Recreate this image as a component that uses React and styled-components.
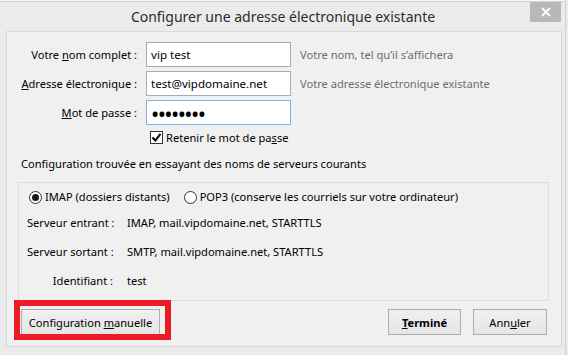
import React from "react";
import styled, { createGlobalStyle } from "styled-components";

const GlobalStyle = createGlobalStyle`
  html, body {
    margin: 0;
    padding: 0;
    background: #ebebeb;
  }
  body {
    font-family: "Noto Sans", "Open Sans", sans-serif;
    font-size: 11.1px;
    color: #000;
  }
`;

const App = () => {
  return (
    <>
      <GlobalStyle />
      <StyledWindow>
        <TopEdge />
        <TitleBar>
          <Title>Configurer une adresse électronique existante</Title>
          <CloseButton aria-label="Fermer">
            <svg width="10" height="10" viewBox="0 0 10 10">
              <path
                d="M1 1 L9 9 M9 1 L1 9"
                stroke="#fff"
                strokeWidth="1.8"
                fill="none"
              />
            </svg>
          </CloseButton>
        </TitleBar>

        <Client>
          <FormGrid>
            <Label>
              Votre <u>n</u>om complet :
            </Label>
            <Field defaultValue="vip test" />
            <Hint>Votre nom, tel qu’il s’affichera</Hint>

            <Label>
              <u>A</u>dresse électronique :
            </Label>
            <Field defaultValue="test@vipdomaine.net" />
            <Hint>Votre adresse électronique existante</Hint>

            <Label>
              <u>M</u>ot de passe :
            </Label>
            <Field type="password" defaultValue="password" $focused />
            <span />

            <span />
            <CheckRow>
              <CheckBox>
                <svg width="11" height="11" viewBox="0 0 11 11">
                  <path
                    d="M1.5 5.5 L4.3 8.5 L9.5 1.8"
                    stroke="#000"
                    strokeWidth="2"
                    fill="none"
                  />
                </svg>
              </CheckBox>
              <span>
                Retenir le mot de pa<u>s</u>se
              </span>
            </CheckRow>
          </FormGrid>

          <FoundText>
            Configuration trouvée en essayant des noms de serveurs courants
          </FoundText>

          <GroupBox>
            <RadioRow>
              <RadioOption>
                <Radio $checked />
                <span>IMAP (dossiers distants)</span>
              </RadioOption>
              <RadioOption>
                <Radio />
                <span>POP3 (conserve les courriels sur votre ordinateur)</span>
              </RadioOption>
            </RadioRow>
            <ServerGrid>
              <ServerLabel>Serveur entrant :</ServerLabel>
              <span>IMAP, mail.vipdomaine.net, STARTTLS</span>
              <ServerLabel>Serveur sortant :</ServerLabel>
              <span>SMTP, mail.vipdomaine.net, STARTTLS</span>
              <ServerLabel>Identifiant :</ServerLabel>
              <span>test</span>
            </ServerGrid>
          </GroupBox>

          <Footer>
            <Highlight>
              <Button $width="139px">
                Configuration <u>m</u>anuelle
              </Button>
            </Highlight>
            <ButtonGroup>
              <Button $width="73px" $bold>
                <u>T</u>erminé
              </Button>
              <Button $width="74px">
                Ann<u>u</u>ler
              </Button>
            </ButtonGroup>
          </Footer>
        </Client>
      </StyledWindow>
    </>
  );
};

const StyledWindow = styled.div`
  width: 565px;
  height: 355px;
  border-right: 1px solid #d2d2d2;
  background: #ebebeb;
  overflow: hidden;
`;

const TopEdge = styled.div`
  height: 1px;
  background: #f7f7f7;
  border-bottom: 1px solid #d4d4d4;
`;

const TitleBar = styled.div`
  position: relative;
  height: 29px;
  display: flex;
  align-items: center;
  justify-content: center;
`;

const Title = styled.div`
  font-size: 14px;
  color: #2b2b2b;
  margin-top: -1px;
  margin-left: 1px;
`;

const CloseButton = styled.div`
  position: absolute;
  top: 0;
  right: 4px;
  width: 31px;
  height: 20px;
  background: #b8b8b8;
  display: flex;
  align-items: center;
  justify-content: center;
`;

const Client = styled.div`
  margin-left: 6px;
  width: 554px;
  background: #f0f0f0;
  border: 1px solid #d9d9d9;
  padding: 10px 0 11px;
`;

const FormGrid = styled.div`
  display: grid;
  grid-template-columns: 130px 145px 1fr;
  column-gap: 9px;
  row-gap: 4px;
  align-items: center;
`;

const Label = styled.label`
  text-align: right;
  white-space: nowrap;
`;

const Field = styled.input.attrs({ readOnly: true })`
  box-sizing: border-box;
  height: 25px;
  width: 145px;
  margin: 0;
  padding: 0 4px;
  border: 1px solid ${(p) => (p.$focused ? "#7eb4ea" : "#ababab")};
  background: #fff;
  font-family: "Noto Sans", sans-serif;
  font-size: ${(p) => (p.type === "password" ? "22px" : "11.6px")};
  letter-spacing: ${(p) => (p.type === "password" ? "-1.6px" : "0")};
  color: #000;
  outline: none;
`;

const Hint = styled.span`
  color: #6d6d6d;
  white-space: nowrap;
`;

const CheckRow = styled.div`
  grid-column: 2 / 4;
  display: flex;
  align-items: center;
  gap: 3px;
  padding-left: 4px;
  margin-top: 1px;
  white-space: nowrap;
`;

const CheckBox = styled.span`
  box-sizing: border-box;
  width: 13px;
  height: 13px;
  border: 1px solid #333;
  background: #fff;
  display: flex;
  align-items: center;
  justify-content: center;
`;

const FoundText = styled.div`
  margin-top: 11px;
  padding-left: 14px;
  line-height: 16px;
  white-space: nowrap;
`;

const GroupBox = styled.div`
  margin: 10px 12px 0 11px;
  border: 1px solid #dcdcdc;
  padding: 6px 0 11px;
`;

const RadioRow = styled.div`
  display: flex;
  gap: 14px;
  padding-left: 10px;
  line-height: 16px;
  white-space: nowrap;
`;

const RadioOption = styled.label`
  display: flex;
  align-items: center;
  gap: 3px;
`;

const Radio = styled.span`
  box-sizing: border-box;
  width: 13px;
  height: 13px;
  border-radius: 50%;
  border: 1px solid #333;
  background: #fff;
  display: flex;
  align-items: center;
  justify-content: center;
  &::after {
    content: "";
    width: 7px;
    height: 7px;
    border-radius: 50%;
    background: ${(p) => (p.$checked ? "#1a1a1a" : "transparent")};
  }
`;

const ServerGrid = styled.div`
  display: grid;
  grid-template-columns: 86px 1fr;
  column-gap: 14px;
  row-gap: 13px;
  margin-top: 10px;
  padding-left: 8px;
  line-height: 16px;
  white-space: nowrap;
`;

const ServerLabel = styled.span`
  text-align: right;
`;

const Footer = styled.div`
  display: flex;
  justify-content: space-between;
  padding: 8px 14px 0;
`;

const ButtonGroup = styled.div`
  display: flex;
  gap: 12px;
`;

const Highlight = styled.span`
  position: relative;
  display: inline-flex;
  &::after {
    content: "";
    position: absolute;
    top: -9px;
    left: -7px;
    right: -11px;
    bottom: -5px;
    border: 6px solid #ed1c24;
    pointer-events: none;
  }
`;

const Button = styled.button`
  box-sizing: border-box;
  width: ${(p) => p.$width};
  height: 26px;
  margin: 0;
  padding: 0;
  border: 1px solid #adadad;
  background: linear-gradient(#f0f0f0, #e5e5e5);
  font-family: "Noto Sans", sans-serif;
  font-size: 11.1px;
  font-weight: ${(p) => (p.$bold ? 700 : 400)};
  color: #000;
`;

export default App;
